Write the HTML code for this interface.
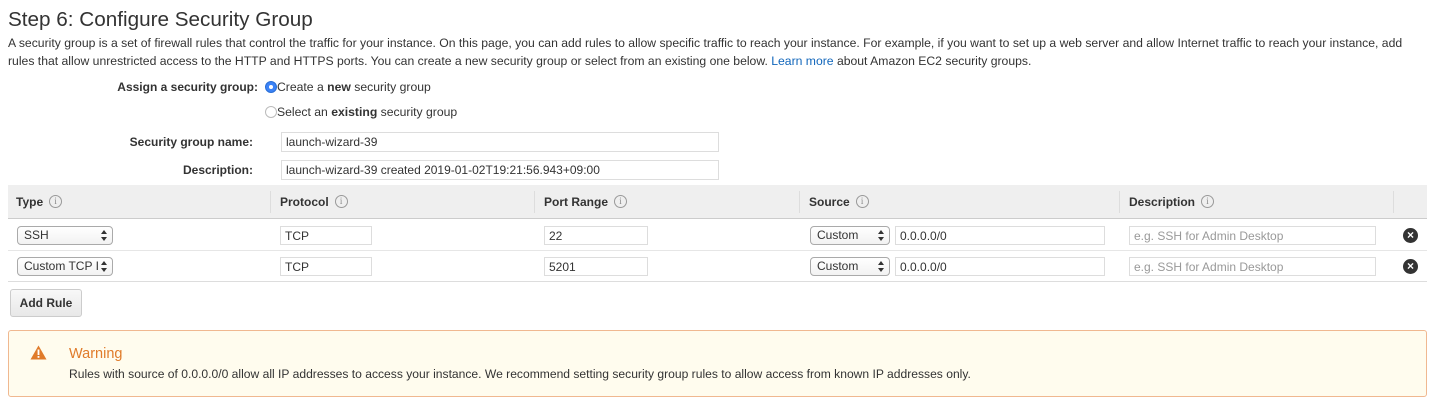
<!DOCTYPE html>
<html><head><meta charset="utf-8"><style>
*{box-sizing:border-box;margin:0;padding:0}
body{width:1442px;height:414px;background:#fff;font-family:"Liberation Sans",Arial,sans-serif;color:#333;position:relative;overflow:hidden}
.a{position:absolute;white-space:nowrap}
.p{font-size:12.2px;color:#333}
.lbl{font-size:12px;font-weight:bold;color:#333;text-align:right}
.inp{position:absolute;border:1px solid #ddd;background:#fff;font-size:12px;padding:2px 4px;height:19px;line-height:14px;color:#333}
.ph{color:#999}
.sel{position:absolute;border:1px solid #aaa;border-radius:4px;background:linear-gradient(#fff,#f2f2f2);font-size:12px;padding:1px 6px;height:19px;line-height:15px;color:#333}
.sel:after{content:"";position:absolute;right:5px;top:3px;border:3px solid transparent;border-bottom:4px solid #333;border-top:0}
.sel:before{content:"";position:absolute;right:5px;top:10px;border:3px solid transparent;border-top:4px solid #333;border-bottom:0}
.th{font-size:12px;font-weight:bold;color:#333}
.info{display:inline-block;width:13px;height:13px;border:1px solid #999;border-radius:50%;font-size:9px;text-align:center;line-height:11px;color:#888;font-weight:normal;margin-left:6px;vertical-align:middle;position:relative;top:-1px;font-family:"Liberation Serif",serif}
.sep{position:absolute;top:191px;width:1px;height:22px;background:#ddd}
.x{position:absolute;width:15px;height:15px;border-radius:50%;background:#333;color:#fff;font-size:12px;line-height:15px;text-align:center;font-weight:bold}
</style></head><body>
<div class="a" style="left:8px;top:8px;font-size:20.7px;color:#333">Step 6: Configure Security Group</div>
<div class="a p" style="left:8px;top:36px">A security group is a set of firewall rules that control the traffic for your instance. On this page, you can add rules to allow specific traffic to reach your instance. For example, if you want to set up a web server and allow Internet traffic to reach your instance, add</div>
<div class="a p" style="left:8px;top:54px">rules that allow unrestricted access to the HTTP and HTTPS ports. You can create a new security group or select from an existing one below. <span style="color:#1166bb">Learn more</span> about Amazon EC2 security groups.</div>

<div class="a lbl" style="right:1184px;top:80px">Assign a security group:</div>
<div class="a" style="left:265px;top:81px;width:12px;height:12px;border-radius:50%;background:#3b82f6;border:1px solid #2a6fd6"><div style="width:4px;height:4px;background:#fff;border-radius:50%;margin:3px"></div></div>
<div class="a p" style="left:277px;top:80px">Create a <b>new</b> security group</div>
<div class="a" style="left:265px;top:106px;width:12px;height:12px;border-radius:50%;border:1px solid #bbb;background:#fff"></div>
<div class="a p" style="left:277px;top:105px">Select an <b>existing</b> security group</div>

<div class="a lbl" style="right:1189px;top:135px">Security group name:</div>
<div class="inp" style="left:281px;top:132px;width:438px;height:20px">launch-wizard-39</div>
<div class="a lbl" style="right:1189px;top:163px">Description:</div>
<div class="inp" style="left:281px;top:160px;width:438px;height:20px">launch-wizard-39 created 2019-01-02T19:21:56.943+09:00</div>

<div class="a" style="left:8px;top:185px;width:1419px;height:34px;background:#efefef;border-bottom:1px solid #ccc"></div>
<div class="sep" style="left:270px"></div><div class="sep" style="left:534px"></div><div class="sep" style="left:799px"></div><div class="sep" style="left:1119px"></div><div class="sep" style="left:1393px"></div>
<div class="a th" style="left:16px;top:195px">Type<span class="info">i</span></div>
<div class="a th" style="left:280px;top:195px">Protocol<span class="info">i</span></div>
<div class="a th" style="left:544px;top:195px">Port Range<span class="info">i</span></div>
<div class="a th" style="left:809px;top:195px">Source<span class="info">i</span></div>
<div class="a th" style="left:1129px;top:195px">Description<span class="info">i</span></div>

<div class="a" style="left:8px;top:250px;width:1419px;height:1px;background:#e6e6e6"></div>
<div class="a" style="left:8px;top:281px;width:1419px;height:1px;background:#ddd"></div>

<div class="sel" style="left:17px;top:226px;width:96px">SSH</div>
<div class="inp" style="left:280px;top:226px;width:92px">TCP</div>
<div class="inp" style="left:544px;top:226px;width:104px">22</div>
<div class="sel" style="left:810px;top:226px;width:80px">Custom</div>
<div class="inp" style="left:895px;top:226px;width:210px">0.0.0.0/0</div>
<div class="inp ph" style="left:1129px;top:226px;width:247px">e.g. SSH for Admin Desktop</div>
<div class="x" style="left:1403px;top:228px">×</div>

<div class="sel" style="left:17px;top:257px;width:96px">Custom TCP I</div>
<div class="inp" style="left:280px;top:257px;width:92px">TCP</div>
<div class="inp" style="left:544px;top:257px;width:104px">5201</div>
<div class="sel" style="left:810px;top:257px;width:80px">Custom</div>
<div class="inp" style="left:895px;top:257px;width:210px">0.0.0.0/0</div>
<div class="inp ph" style="left:1129px;top:257px;width:247px">e.g. SSH for Admin Desktop</div>
<div class="x" style="left:1403px;top:259px">×</div>

<div class="a" style="left:10px;top:289px;width:72px;height:28px;border:1px solid #ccc;border-radius:3px;background:linear-gradient(#f8f8f8,#e8e8e8);font-size:12px;font-weight:bold;text-align:center;line-height:26px;color:#333">Add Rule</div>

<div class="a" style="left:8px;top:330px;width:1419px;height:67px;background:#fffcee;border:1px solid #f0b890;border-radius:3px"></div>
<svg class="a" style="left:30px;top:345px" width="17" height="15" viewBox="0 0 17 15"><path d="M8.5 0.5 L16.5 14.5 L0.5 14.5Z" fill="#e07b2a"/><rect x="7.6" y="4.5" width="1.8" height="5.5" fill="#fff"/><rect x="7.6" y="11" width="1.8" height="1.8" fill="#fff"/></svg>
<div class="a" style="left:69px;top:346px;font-size:14.5px;color:#e07b2a">Warning</div>
<div class="a p" style="left:69px;top:367px;font-size:12.1px">Rules with source of 0.0.0.0/0 allow all IP addresses to access your instance. We recommend setting security group rules to allow access from known IP addresses only.</div>
</body></html>
